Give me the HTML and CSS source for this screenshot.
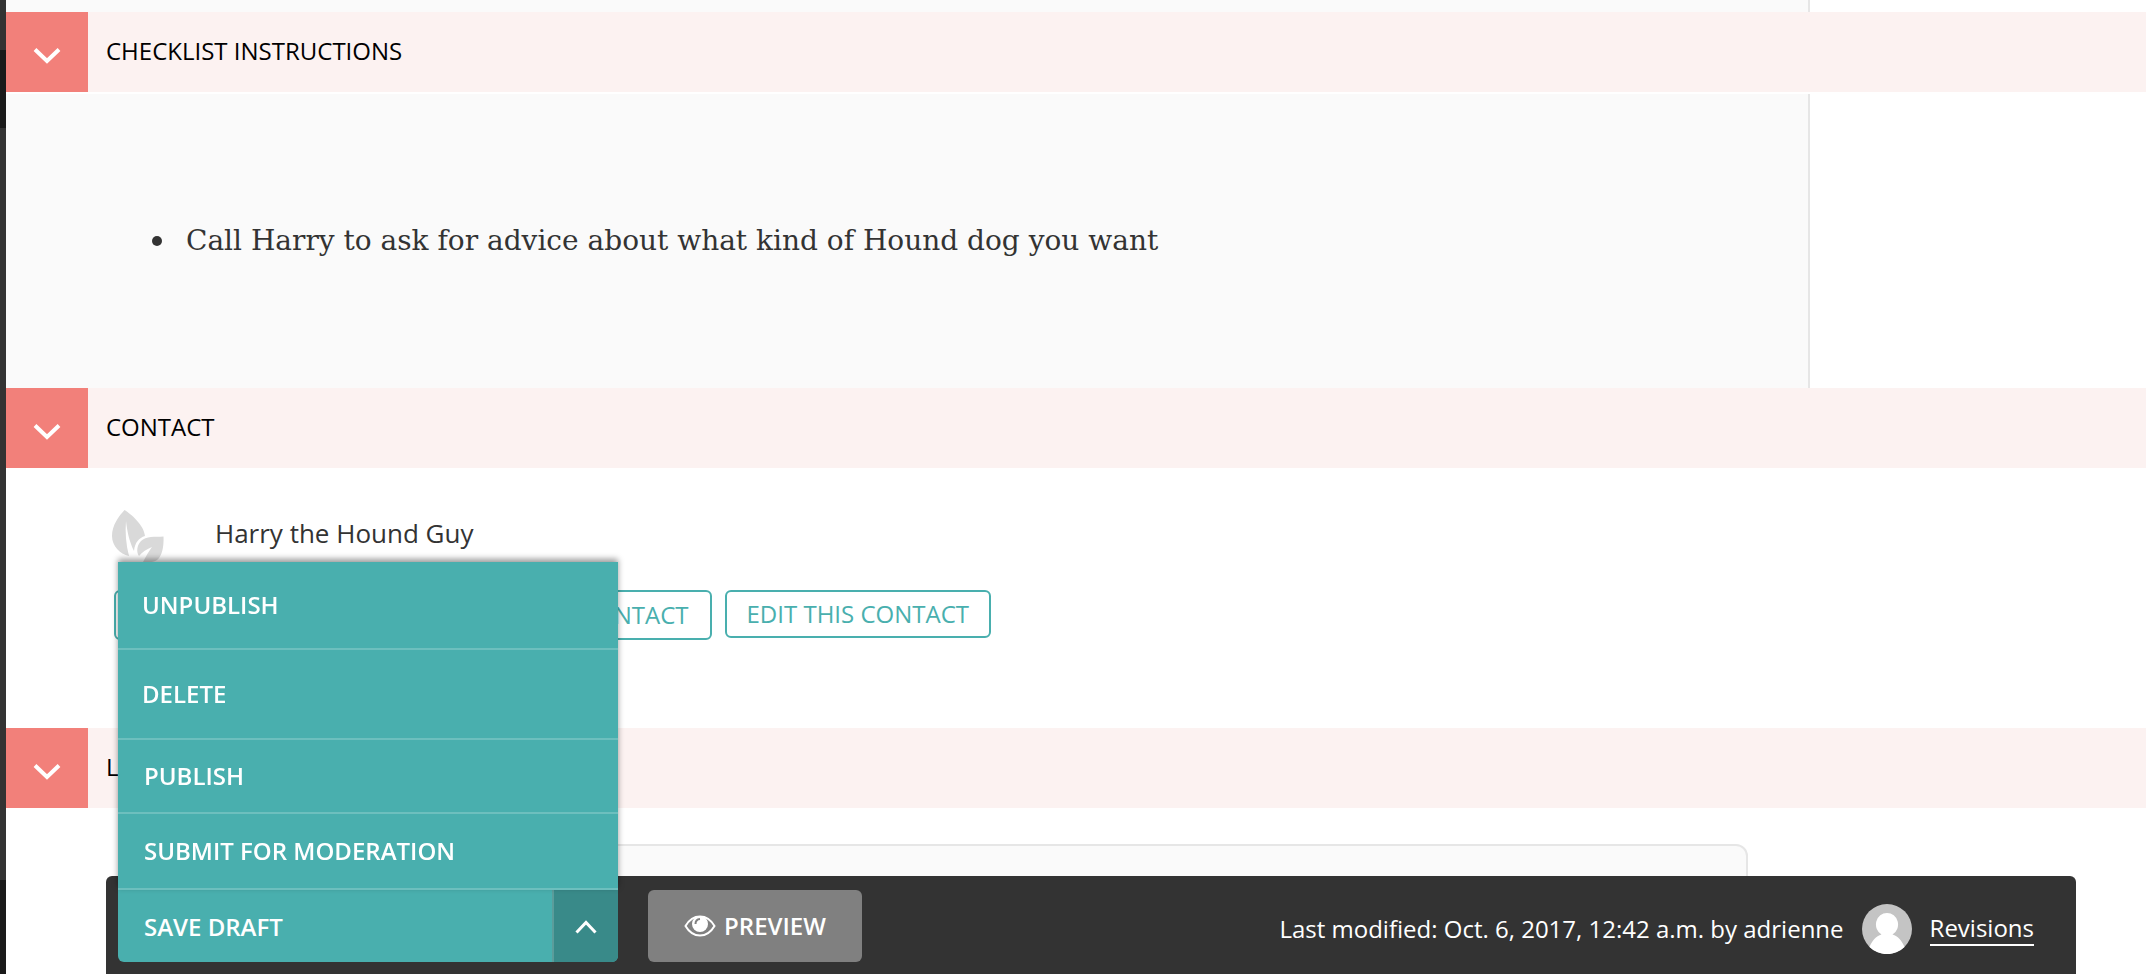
FILE: index.html
```html
<!DOCTYPE html>
<html lang="en">
<head>
<meta charset="utf-8">
<title>Edit page</title>
<link rel="stylesheet" href="styles.css">
</head>
<body>
<div class="page">
  <div class="rail"><span class="rail-active"></span><span class="rail-foot"></span></div>
  <main class="content">
    <div class="panel panel-end"></div>

    <section>
      <header class="band">
        <button class="band-toggle" type="button" aria-label="Collapse checklist instructions">
          <svg class="chevron" viewBox="0 0 28 18"><path d="M2 2.500 14 14 26 2.500"/></svg>
        </button>
        <h2 class="band-title">CHECKLIST INSTRUCTIONS</h2>
      </header>
      <div class="panel panel-text">
        <ul class="richtext"><li>Call Harry to ask for advice about what kind of Hound dog you want</li></ul>
      </div>
    </section>

    <section>
      <header class="band">
        <button class="band-toggle" type="button" aria-label="Collapse contact">
          <svg class="chevron" viewBox="0 0 28 18"><path d="M2 2.500 14 14 26 2.500"/></svg>
        </button>
        <h2 class="band-title">CONTACT</h2>
      </header>
      <div class="chooser">
        <div class="chosen">
          <svg class="leaf" viewBox="0 0 52 52">
            <path d="M12.500 0C19 4 32 15 33 26 27 28 23 32 22 41 17 31 15 20 14 11 13 22 14 35 17 46 8 44 0 36 0 26 0 15 7 6 12.500 0Z"/>
            <path d="M51.500 26.500C52 37 50 52 39 52L31 52C34 46 37 41 40 37 35 39 30 42 27 46 24 42 25 35 29 31 34 26 43 27 51.500 26.500Z"/>
          </svg>
          <span>Harry the Hound Guy</span>
        </div>
        <div class="chooser-actions">
          <button class="outline" type="button">CLEAR CHOICE</button>
          <button class="outline" type="button">CHOOSE ANOTHER CONTACT</button>
          <a class="outline outline-link" href="#">EDIT THIS CONTACT</a>
        </div>
      </div>
    </section>

    <section>
      <header class="band">
        <button class="band-toggle" type="button" aria-label="Collapse location">
          <svg class="chevron" viewBox="0 0 28 18"><path d="M2 2.500 14 14 26 2.500"/></svg>
        </button>
        <h2 class="band-title">LOCATION</h2>
      </header>
      <div class="field"></div>
    </section>
  </main>
</div>

<footer class="bar">
  <div class="dropup">
    <div class="dropup-menu">
      <a class="item item-first" href="#">UNPUBLISH</a>
      <a class="item item-second" href="#">DELETE</a>
      <button class="item" type="button">PUBLISH</button>
      <button class="item item-last" type="button">SUBMIT FOR MODERATION</button>
    </div>
    <button class="save" type="button">SAVE DRAFT</button>
    <button class="dropup-toggle" type="button" aria-label="More actions">
      <svg class="caret" viewBox="0 0 22 14"><path d="M1.500 12.500 11 2.500 20.500 12.500"/></svg>
    </button>
  </div>
  <button class="preview" type="button">
    <svg class="eye" viewBox="0 0 32 22">
      <path class="eye-line" d="M1.500 11C5 5 10 1.500 16 1.500S27 5 30.500 11C27 17 22 20.500 16 20.500S5 17 1.500 11Z"/>
      <circle class="eye-ball" cx="16" cy="9" r="8"/>
      <path class="eye-glint" d="M11.500 9C11.500 6 13.500 4.200 16 4"/>
    </svg>
    PREVIEW
  </button>
  <div class="meta">
    <span>Last modified: Oct. 6, 2017, 12:42 a.m. by adrienne</span>
    <svg class="avatar" viewBox="0 0 50 50" role="img" aria-label="adrienne">
      <circle cx="25" cy="25" r="25" fill="#c4c4c4"/>
      <path fill="#fff" d="M25 9A11 11.500 0 0 1 30.500 30.500C36 32 40 37 42.500 43A25 25 0 0 1 7.500 43C10 37 14 32 19.500 30.500A11 11.500 0 0 1 25 9Z"/>
    </svg>
    <a class="revisions" href="#">Revisions</a>
  </div>
</footer>
</body>
</html>
```
FILE: styles.css
```css
* { box-sizing: border-box; }

body {
  margin: 0;
  background: #fff;
  color: #333;
  font-family: "Open Sans", sans-serif;
  font-size: 24px;
  line-height: 32px;
}

button {
  margin: 0;
  border: 0;
  padding: 0;
  font: inherit;
  cursor: pointer;
}

a { text-decoration: none; }

.page {
  display: flex;
  height: 100vh;
  overflow: hidden;
}

.rail {
  flex: none;
  display: flex;
  flex-direction: column;
  justify-content: space-between;
  width: 6px;
  padding-top: 50px;
  background: #333;
}
.rail-active { height: 78px; background: #1a1a1a; }
.rail-foot { height: 94px; background: #1a1a1a; }

.content { flex: 1; min-width: 0; }

.panel {
  margin-right: 336px;
  border-right: 2px solid #e6e6e6;
  background: #fafafa;
}
.panel-end { height: 12px; }
.panel-text {
  margin-top: 2px;
  padding: 127px 100px;
}

.richtext {
  margin: 0;
  padding-left: 46px;
  list-style: none;
  font-family: "Roboto Slab", "DejaVu Serif", serif;
  font-size: 28px;
  line-height: 40px;
}
.richtext li {
  display: flex;
  align-items: center;
  gap: 24px;
}
.richtext li::before {
  content: "";
  flex: none;
  width: 10px;
  height: 10px;
  border-radius: 50%;
  background: #333;
}

.band {
  display: flex;
  height: 80px;
  background: #fcf2f1;
}
.band-toggle {
  display: flex;
  align-items: center;
  justify-content: center;
  width: 82px;
  padding-top: 8px;
  background: #f2807a;
}
.band-title {
  margin: 0;
  padding: 23px 18px;
  color: #000;
  font-size: 24px;
  font-weight: 400;
}

.chevron { width: 28px; height: 18px; }
.chevron path, .caret path { fill: none; stroke: #fff; stroke-width: 4; }
.caret { width: 22px; height: 14px; }
.caret path { stroke-width: 3; }

.chooser {
  height: 260px;
  padding: 42px 106px;
}
.chosen {
  display: flex;
  gap: 51px;
  height: 80px;
  font-size: 26px;
  line-height: 46px;
}
.leaf { width: 52px; height: 52px; fill: #d9d9d9; }
.chooser-actions {
  display: flex;
  align-items: flex-start;
  gap: 13px;
  padding-left: 2px;
}
.outline {
  border: 2px solid #49afae;
  border-radius: 6px;
  padding: 7px 21px;
  background: #fff;
  color: #49afae;
}
.outline-link { padding: 6px 20px; }

.field {
  height: 200px;
  margin: 36px 398px 0 200px;
  border: 2px solid #e6e6e6;
  border-radius: 12px;
  background: #fafafa;
}

.bar {
  position: fixed;
  right: 70px;
  bottom: 0;
  left: 106px;
  display: flex;
  padding: 14px 42px 12px 12px;
  border-radius: 6px 6px 0 0;
  background: #333;
  color: #fff;
}

.dropup {
  position: relative;
  display: flex;
  width: 500px;
  height: 72px;
  border-radius: 0 0 6px 6px;
  background: #49afae;
  font-weight: 600;
}
.dropup-menu {
  position: absolute;
  right: 0;
  bottom: 100%;
  left: 0;
  display: flex;
  flex-direction: column;
  background: #49afae;
  box-shadow: 0 -3px 6px rgba(0, 0, 0, 0.4);
}
.item {
  display: flex;
  align-items: center;
  height: 74px;
  border-bottom: 2px solid #6dbfbe;
  padding: 0 26px;
  background: none;
  color: #fff;
}
.item-first { height: 88px; padding: 0 24px; }
.item-second { height: 90px; padding: 0 24px; }
.item-last { height: 76px; }
.save {
  flex: 1;
  padding: 2px 26px 0;
  background: none;
  color: #fff;
  text-align: left;
}
.dropup-toggle {
  display: flex;
  align-items: center;
  justify-content: center;
  width: 66px;
  padding-top: 2px;
  border-left: 2px solid #5b9d9b;
  border-radius: 0 0 6px 0;
  background: #398a89;
}

.preview {
  display: flex;
  align-items: center;
  justify-content: center;
  gap: 8px;
  width: 214px;
  height: 72px;
  margin-left: 30px;
  border-radius: 6px;
  background: #808080;
  color: #fff;
  font-weight: 600;
}
.eye { width: 32px; height: 22px; }
.eye-line { fill: none; stroke: #fff; stroke-width: 2; }
.eye-ball { fill: #fff; }
.eye-glint { fill: none; stroke: #808080; stroke-width: 2; }

.meta {
  display: flex;
  align-items: center;
  gap: 18px;
  margin-left: auto;
  padding-top: 6px;
}
.avatar { width: 50px; height: 50px; }
.revisions {
  border-bottom: 2px solid #fff;
  color: #fff;
}
```
